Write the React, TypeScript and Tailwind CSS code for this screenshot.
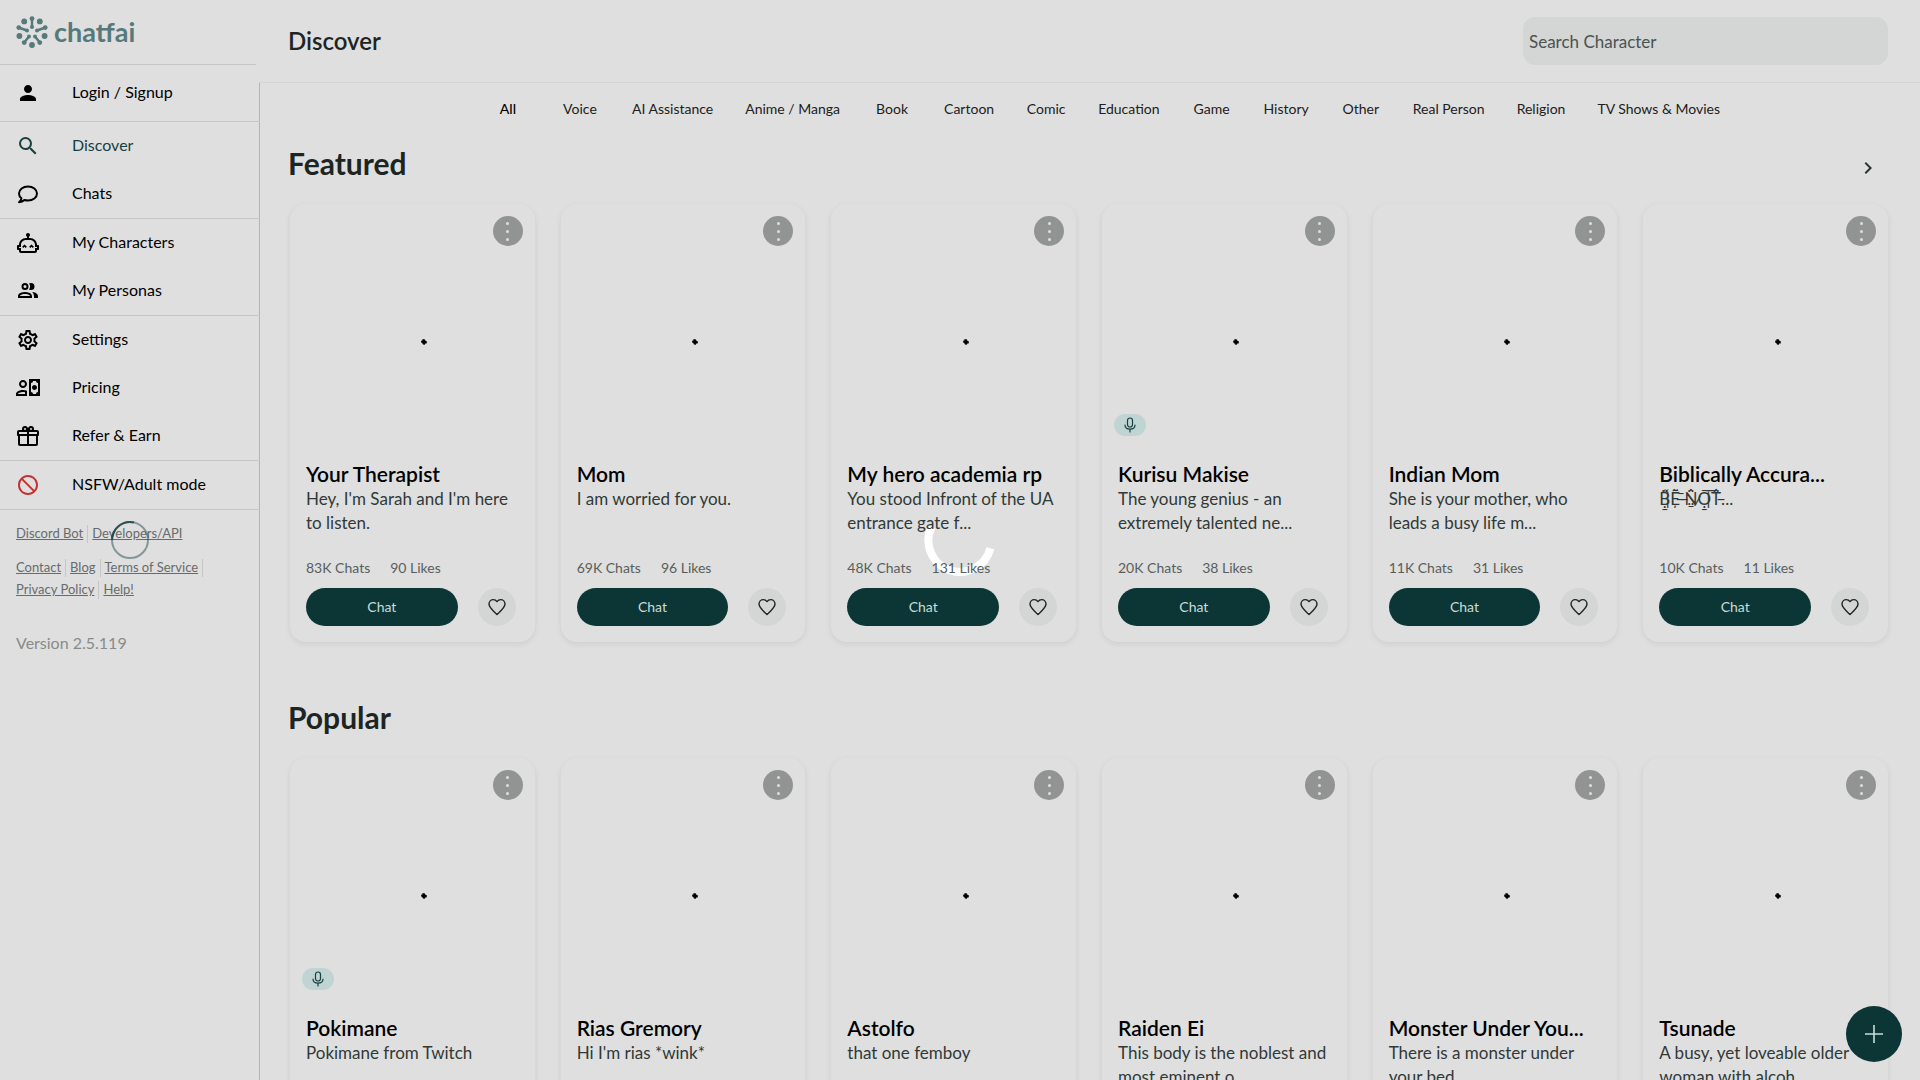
import { useState } from 'react';
import type { ReactNode } from 'react';
import { MdBlock, MdChevronRight, MdOutlineSettings, MdPerson, MdSearch } from 'react-icons/md';

interface Character {
  name: string;
  text: string;
  chats: string;
  likes: string;
  voice?: boolean;
}

interface NavItem {
  label: string;
  icon: ReactNode;
}

// ===== DATA =====
const categories = [
  'All', 'Voice', 'AI Assistance', 'Anime / Manga', 'Book', 'Cartoon', 'Comic',
  'Education', 'Game', 'History', 'Other', 'Real Person', 'Religion', 'TV Shows & Movies',
];

const featured: Character[] = [
  { name: 'Your Therapist', text: "Hey, I'm Sarah and I'm here to listen.", chats: '83K', likes: '90' },
  { name: 'Mom', text: 'I am worried for you.', chats: '69K', likes: '96' },
  { name: 'My hero academia rp', text: 'You stood Infront of the UA entrance gate f...', chats: '48K', likes: '131' },
  { name: 'Kurisu Makise', text: 'The young genius - an extremely talented ne...', chats: '20K', likes: '38', voice: true },
  { name: 'Indian Mom', text: 'She is your mother, who leads a busy life m...', chats: '11K', likes: '31' },
  {
    name: 'Biblically Accura...',
    text: 'B\u0335\u030b\u0308\u0323\u0331E\u0336\u0304\u0303\u0326 \u0336\u0304N\u0337\u0307\u0308\u0331\u0324O\u0335\u0304\u0305\u0323\u0331T\u0336\u0308\u0307...',
    chats: '10K',
    likes: '11',
  },
];

const popular: Character[] = [
  { name: 'Pokimane', text: 'Pokimane from Twitch', chats: '9K', likes: '24', voice: true },
  { name: 'Rias Gremory', text: "Hi I'm rias *wink*", chats: '8K', likes: '31' },
  { name: 'Astolfo', text: 'that one femboy', chats: '8K', likes: '40' },
  { name: 'Raiden Ei', text: 'This body is the noblest and most eminent o...', chats: '7K', likes: '28' },
  { name: 'Monster Under You...', text: 'There is a monster under your bed...', chats: '7K', likes: '19' },
  { name: 'Tsunade', text: 'A busy, yet loveable older woman with alcoh...', chats: '6K', likes: '22' },
];

// ===== ICONS =====
function PathIcon({ d }: { d: string }) {
  return (
    <svg viewBox="0 0 24 24" className="size-6" fill="currentColor" fillRule="evenodd">
      <path d={d} />
    </svg>
  );
}

const botPath =
  'M22 14H21C21 10.13 17.87 7 14 7H13V5.73C13.6 5.39 14 4.74 14 4C14 2.9 13.11 2 12 2S10 2.9 10 4C10 4.74 10.4 5.39 11 5.73V7H10C6.13 7 3 10.13 3 14H2C1.45 14 1 14.45 1 15V18C1 18.55 1.45 19 2 19H3V20C3 21.11 3.9 22 5 22H19C20.11 22 21 21.11 21 20V19H22C22.55 19 23 18.55 23 18V15C23 14.45 22.55 14 22 14M21 17H19V20H5V17H3V16H5V14C5 11.24 7.24 9 10 9H14C16.76 9 19 11.24 19 14V16H21V17M8.5 13.5L10.86 15.86L9.68 17.04L8.5 15.86L7.32 17.04L6.14 15.86L8.5 13.5M15.5 13.5L17.86 15.86L16.68 17.04L15.5 15.86L14.32 17.04L13.14 15.86L15.5 13.5Z';
const peoplePath =
  'M13.07 10.41A5 5 0 0 0 13.07 4.59A3.39 3.39 0 0 1 15 4A3.5 3.5 0 0 1 15 11A3.39 3.39 0 0 1 13.07 10.41M5.5 7.5A3.5 3.5 0 1 1 9 11A3.5 3.5 0 0 1 5.5 7.5M7.5 7.5A1.5 1.5 0 1 0 9 6A1.5 1.5 0 0 0 7.5 7.5M16 17V19H2V17S2 13 9 13 16 17 16 17M14 17C13.86 16.22 12.67 15 9 15S4.07 16.31 4 17M15.95 13A5.32 5.32 0 0 1 18 17V19H22V17S22 13.37 15.94 13Z';
const cashPath =
  'M11 8C11 10.21 9.21 12 7 12S3 10.21 3 8 4.79 4 7 4 11 5.79 11 8M9 8A2 2 0 1 0 5 8A2 2 0 1 0 9 8M11 14.72V20H0V18C0 15.79 3.13 14 7 14C8.5 14 9.87 14.27 11 14.72M9 16.2C8.4 16.07 7.7 16 7 16C4.1 16 2 17.2 2 18H9V16.2M24 20H13V3H24V20M16 11.5C16 10.12 17.12 9 18.5 9S21 10.12 21 11.5 19.88 14 18.5 14 16 12.88 16 11.5M22 7C20.9 7 20 6.11 20 5H17C17 6.11 16.11 7 15 7V16C16.11 16 17 16.9 17 18H20C20 16.9 20.9 16 22 16V7Z';
const giftPath =
  'M22 12V20A2 2 0 0 1 20 22H4A2 2 0 0 1 2 20V12A1 1 0 0 1 1 11V8A2 2 0 0 1 3 6H6.17A3 3 0 0 1 6 5A3 3 0 0 1 9 2C10 2 10.88 2.5 11.43 3.24L12 4L12.57 3.24C13.12 2.5 14 2 15 2A3 3 0 0 1 18 5A3 3 0 0 1 17.83 6H21A2 2 0 0 1 23 8V11A1 1 0 0 1 22 12M4 20H11V12H4V20M20 20V12H13V20H20M9 4A1 1 0 0 0 8 5A1 1 0 0 0 9 6A1 1 0 0 0 10 5A1 1 0 0 0 9 4M15 4A1 1 0 0 0 14 5A1 1 0 0 0 15 6A1 1 0 0 0 16 5A1 1 0 0 0 15 4M3 8V10H11V8H3M13 8V10H21V8H13Z';

function ChatIcon() {
  return (
    <svg viewBox="0 0 24 24" className="size-6" fill="none" stroke="currentColor" strokeWidth="2" strokeLinejoin="round">
      <path d="M12 4.5C7 4.5 3 7.6 3 11.5C3 13.4 3.9 15.1 5.4 16.3C5.2 17.8 4.2 19.2 3 20.2C5 20.1 7 19.4 8.4 18C9.5 18.3 10.7 18.5 12 18.5C17 18.5 21 15.4 21 11.5S17 4.5 12 4.5Z" />
    </svg>
  );
}

function LogoMark() {
  return (
    <svg viewBox="0 0 32 32" className="size-8" fill="currentColor" stroke="currentColor" strokeLinecap="round">
      {/* spokes */}
      <g strokeWidth="2.4">
        <path d="M16 2.5V11M2.5 11.5L11 14.5M29.5 11.5L21 14.5M8.2 26.6L13 20.5M23.8 26.6L19 20.5" />
      </g>
      <g stroke="none">
        <circle cx="16" cy="2.6" r="2.4" />
        <circle cx="16" cy="11" r="2" />
        <circle cx="2.8" cy="11.6" r="2.4" />
        <circle cx="11" cy="14.5" r="2" />
        <circle cx="29.2" cy="11.6" r="2.4" />
        <circle cx="21" cy="14.5" r="2" />
        <circle cx="8.2" cy="26.6" r="2.4" />
        <circle cx="13" cy="20.6" r="2" />
        <circle cx="23.8" cy="26.6" r="2.4" />
        <circle cx="19" cy="20.6" r="2" />
        <circle cx="8.2" cy="5.4" r="2.9" />
        <circle cx="23.8" cy="5.4" r="2.9" />
        <circle cx="3.4" cy="20" r="2.9" />
        <circle cx="28.6" cy="20" r="2.9" />
        <circle cx="16" cy="29" r="2.9" />
      </g>
    </svg>
  );
}

function MicIcon() {
  return (
    <svg viewBox="0 0 12 16" className="h-4 w-3" fill="none" stroke="currentColor" strokeWidth="1.2" strokeLinecap="round">
      <rect x="3.5" y="1" width="5" height="9" rx="2.5" />
      <path d="M1 8C1 13.5 11 13.5 11 8M6 12.5V15" />
    </svg>
  );
}

function HeartIcon() {
  return (
    <svg viewBox="0 0 18 18" className="size-[18px]" fill="none" stroke="currentColor" strokeWidth="1.4" strokeLinejoin="round">
      <path d="M9 16.4L7.6 15.2C3.6 11.6 1 9.2 1 6.1C1 3.5 2.9 1.6 5.3 1.6C6.8 1.6 8.1 2.3 9 3.6C9.9 2.3 11.2 1.6 12.7 1.6C15.1 1.6 17 3.5 17 6.1C17 9.2 14.4 11.6 10.4 15.2Z" />
    </svg>
  );
}

// ===== SIDEBAR =====
const navGroups: NavItem[][] = [
  [
    { label: 'Discover', icon: <MdSearch className="size-6" /> },
    { label: 'Chats', icon: <ChatIcon /> },
  ],
  [
    { label: 'My Characters', icon: <PathIcon d={botPath} /> },
    { label: 'My Personas', icon: <PathIcon d={peoplePath} /> },
  ],
  [
    { label: 'Settings', icon: <MdOutlineSettings className="size-6" /> },
    { label: 'Pricing', icon: <PathIcon d={cashPath} /> },
    { label: 'Refer & Earn', icon: <PathIcon d={giftPath} /> },
  ],
  [{ label: 'NSFW/Adult mode', icon: <MdBlock className="size-6 -scale-x-100 text-[#c43030]" /> }],
];

function NavLink({ item, active }: { item: NavItem; active?: boolean }) {
  return (
    <a href="#" className={`flex h-12 items-center px-4 text-base ${active ? 'text-[#17403f]' : 'text-black'}`}>
      <span className="flex w-6 justify-center">{item.icon}</span>
      <span className="ml-8 pb-[2px]">{item.label}</span>
    </a>
  );
}

function FooterLinks({ items, last }: { items: string[]; last?: boolean }) {
  return (
    <div className="flex h-[22px] items-center">
      {items.map((label, i) => (
        <span
          key={label}
          className={`mr-1 flex h-[18px] items-center ${i < items.length - 1 || last ? 'border-r border-[#c6c6c6] pr-1' : ''}`}
        >
          <a href="#" className="underline">{label}</a>
        </span>
      ))}
    </div>
  );
}

function Sidebar() {
  return (
    <aside className="relative w-[260px] shrink-0">
      <div className="mr-1 flex h-[65px] items-center gap-[6px] border-b border-[#c6c6c6] px-4 text-[#56797a]">
        <LogoMark />
        <span className="pb-[2px] text-[27px] leading-none font-bold">chatfai</span>
      </div>
      <div className="flex h-[57px] flex-col justify-center border-b border-[#c6c6c6]">
        <NavLink item={{ label: 'Login / Signup', icon: <MdPerson className="size-6" /> }} />
      </div>
      {navGroups.map((group) => (
        <nav key={group[0].label} className="border-b border-[#c6c6c6]">
          {group.map((item) => (
            <NavLink key={item.label} item={item} active={item.label === 'Discover'} />
          ))}
        </nav>
      ))}
      <div className="px-4 pt-[13px] text-[13px] text-[#686b6a]">
        <FooterLinks items={['Discord Bot', 'Developers/API']} />
        <div className="h-3" />
        <FooterLinks items={['Contact', 'Blog', 'Terms of Service']} last />
        <FooterLinks items={['Privacy Policy', 'Help!']} />
      </div>
      <p className="mt-[30px] px-4 text-base text-[#888b8a]">Version 2.5.119</p>
    </aside>
  );
}

// ===== CARD =====
function CharacterCard({ character }: { character: Character }) {
  const [liked, setLiked] = useState(false);

  return (
    <article className="min-w-0 rounded-2xl shadow-[0_2px_6px_rgba(0,0,0,0.08)]">
      <div className="relative flex h-[244px] items-center justify-center">
        <button
          aria-label="More options"
          className="absolute top-3 right-3 flex size-[30px] flex-col items-center justify-center gap-[5px] rounded-full bg-[#929493]"
        >
          <span className="size-[3px] rounded-full bg-[#dfdfdf]" />
          <span className="size-[3px] rounded-full bg-[#dfdfdf]" />
          <span className="size-[3px] rounded-full bg-[#dfdfdf]" />
        </button>
        {/* loading dot shown while the picture is fetched */}
        <svg viewBox="0 0 6 6" className="mt-8 ml-6 size-[6px]">
          <path d="M1.6 0L4 0.6L4.4 1.8L6 2.6L5.6 4.4L4.4 4.6L3.4 6L1.8 5.2L1.4 4.2L0 3.2L0.4 1.6L1.4 1.4Z" />
        </svg>
        {character.voice && (
          <span className="absolute bottom-3 left-3 flex h-[22px] w-8 items-center justify-center rounded-full bg-[#c0d4d4] text-[#17403f]">
            <MicIcon />
          </span>
        )}
      </div>
      <div className="px-4 pt-[13px] pb-4">
        <h3 className="truncate text-[21px] leading-[26px] font-semibold text-black">{character.name}</h3>
        <p className="h-12 text-[17px] leading-6 text-[#303937]">{character.text}</p>
        <div className="mt-[23px] mb-[10px] flex gap-5 text-sm leading-5 text-[#585e5c]">
          <span>{character.chats} Chats</span>
          <span>{character.likes} Likes</span>
        </div>
        <div className="flex gap-5 pr-[3px]">
          <button className="h-[38px] flex-1 rounded-full bg-[#0c3635] text-sm text-[#c9dcda]">Chat</button>
          <button
            aria-label="Like"
            onClick={() => setLiked(!liked)}
            className={`flex size-[38px] items-center justify-center rounded-full bg-[#d3d6d5] ${liked ? 'text-[#c43030]' : 'text-[#1d2523]'}`}
          >
            <HeartIcon />
          </button>
        </div>
      </div>
    </article>
  );
}

function Section({ title, items, arrow }: { title: string; items: Character[]; arrow?: boolean }) {
  return (
    <section className="pr-8 pb-[35px] pl-7">
      <div className="flex h-[81px] items-center justify-between">
        <h2 className="pb-[2px] text-3xl leading-10 font-bold text-[#1d2523]">{title}</h2>
        {arrow && (
          <button aria-label="Next" className="mt-2 p-2 text-[#2c3533]">
            <MdChevronRight className="size-6" />
          </button>
        )}
      </div>
      <div className="grid grid-cols-6 gap-[26px] pl-[2px]">
        {items.map((c) => (
          <CharacterCard key={c.name} character={c} />
        ))}
      </div>
    </section>
  );
}

export default function App() {
  const [category, setCategory] = useState('All');
  const [query, setQuery] = useState('');

  return (
    <div className="relative isolate flex h-screen overflow-hidden bg-[#dfdfdf] font-['Lato','Noto_Sans',sans-serif]">
      {/* page loader, under the card texts */}
      <div className="pointer-events-none absolute inset-0 -z-10 flex items-center justify-center">
        <svg viewBox="0 0 72 72" className="size-[72px]" fill="none" stroke="white" strokeWidth="8">
          <path d="M66.4 44.2A31.5 31.5 0 1 1 7.5 22.7" />
        </svg>
      </div>

      <Sidebar />

      <main className="-ml-px flex min-w-0 flex-1 flex-col">
        <header className="flex h-[83px] shrink-0 items-center justify-between border-b border-[#d3d5d4] pr-8 pl-[29px]">
          <h1 className="text-2xl font-semibold text-[#1d2523]">Discover</h1>
          <input
            type="text"
            aria-label="Search Character"
            placeholder="Search Character"
            value={query}
            onChange={(e) => setQuery(e.target.value)}
            className="h-12 w-[365px] rounded-xl bg-[#d3d6d5] px-[6px] text-[17px] placeholder:text-[#4c5250] focus:outline-none"
          />
        </header>

        <div className="flex-1 overflow-hidden border-l border-[#b5b5b5]">
          {/* category filter */}
          <nav className="flex h-10 items-end justify-center gap-2 pl-7">
            {categories.map((c) => (
              <button
                key={c}
                onClick={() => setCategory(c)}
                className={`h-7 min-w-16 px-3 text-sm whitespace-nowrap ${category === c ? 'font-medium text-black' : 'text-[#1d2020]'}`}
              >
                {c}
              </button>
            ))}
          </nav>
          <Section title="Featured" items={featured} arrow />
          <Section title="Popular" items={popular} />
        </div>
      </main>

      <button
        aria-label="Create character"
        className="fixed right-[18px] bottom-[18px] flex size-14 items-center justify-center rounded-full bg-[#0c3635] text-[#c9dcda]"
      >
        <svg viewBox="0 0 18 18" className="size-[18px]" stroke="currentColor" strokeWidth="1.6">
          <path d="M9 0V18M0 9H18" />
        </svg>
      </button>

      {/* sidebar loader */}
      <div className="pointer-events-none fixed inset-y-0 left-0 flex w-[260px] items-center justify-center">
        <svg viewBox="0 0 38 38" className="size-[38px]" fill="none" strokeWidth="2">
          <circle cx="19" cy="19" r="18" stroke="#17403f" strokeOpacity="0.45" />
          <path d="M1 19A18 18 0 0 1 23 1.5" stroke="#17403f" strokeOpacity="0.8" />
        </svg>
      </div>
    </div>
  );
}
